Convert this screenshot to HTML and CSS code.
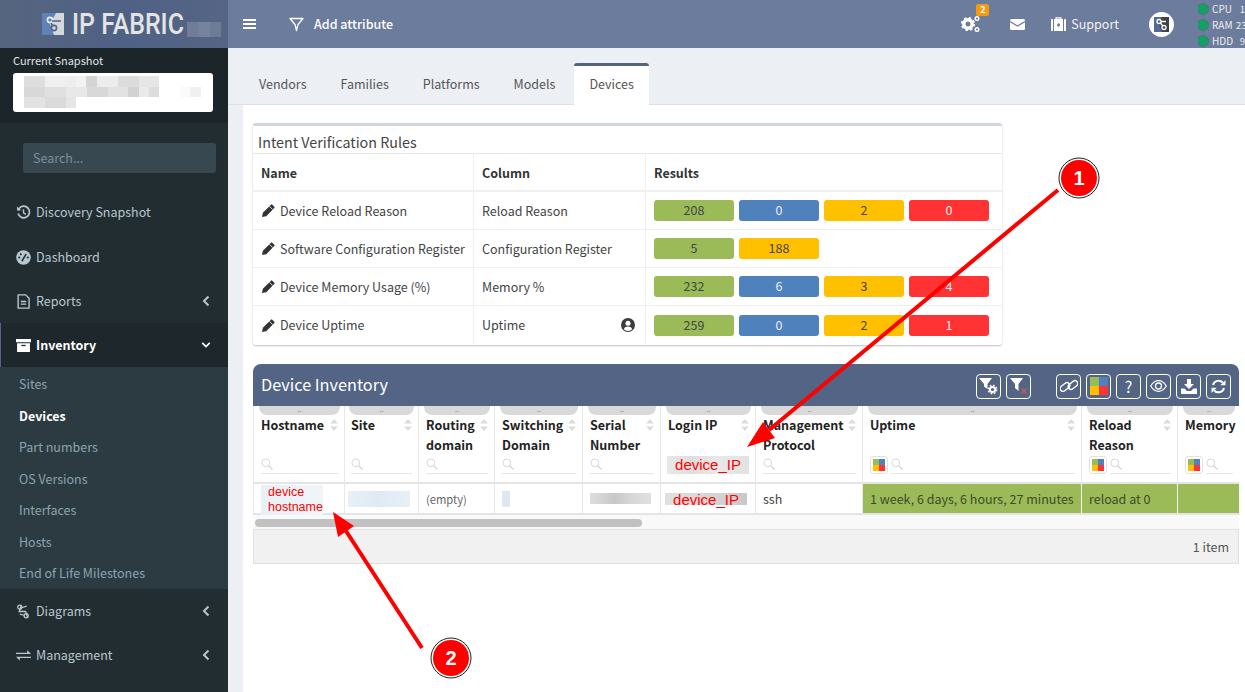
FILE: index.html
```html
<!DOCTYPE html>
<html lang="en">
<head>
<meta charset="utf-8">
<title>Device Inventory</title>
<link rel="stylesheet" href="styles.css">
</head>
<body>
<svg class="defs" width="0" height="0" aria-hidden="true">
  <defs>
    <symbol id="pencil" viewBox="0 0 16 16"><path d="M1 15l1-4.600L10.600 1.800a1 1 0 0 1 1.400 0l2.200 2.200a1 1 0 0 1 0 1.400L5.600 14z" fill="currentColor"/><path d="M9 3.500l3.500 3.500" stroke="#fff" stroke-width=".9"/></symbol>
    <symbol id="sort" viewBox="0 0 8 12"><path d="M4 0l4 4.500H0zM4 12l4-4.500H0z" fill="#dcdcdc"/></symbol>
    <symbol id="lens" viewBox="0 0 12 12"><circle cx="4.800" cy="4.800" r="3.900" fill="none" stroke="#d8d8d8" stroke-width="1"/><path d="M7.700 7.700l3.800 3.800" stroke="#d8d8d8" stroke-width="1.400"/></symbol>
    <symbol id="tiles" viewBox="0 0 12 12"><rect width="6" height="6" fill="#9bbb59"/><rect x="6" width="6" height="6" fill="#4f81bd"/><rect y="6" width="6" height="6" fill="#ffc000"/><rect x="6" y="6" width="6" height="6" fill="#ff3333"/></symbol>
    <symbol id="chev-left" viewBox="0 0 8 12"><path d="M6.500 1.500L2 6l4.500 4.500" fill="none" stroke="currentColor" stroke-width="2"/></symbol>
  </defs>
</svg>
<div class="app">
  <aside class="sidebar">
    <div class="brand">
      <svg class="brand-mark" width="22" height="22" viewBox="0 0 22 22"><rect width="22" height="22" fill="#d4d7dc"/><path d="M0 0h14L8 11l4 11H0z" fill="#5f83b8"/><circle cx="8" cy="7" r="2.600" fill="none" stroke="#eee" stroke-width="1.600"/><circle cx="12" cy="15" r="2.600" fill="none" stroke="#566584" stroke-width="1.600"/><path d="M10 8h9M9 10l2 3" stroke="#566584" stroke-width="1.500"/></svg>
      <span class="brand-text">IP FABRIC</span>
      <svg class="brand-blur" width="34" height="15" viewBox="0 0 34 15"><rect width="11" height="15" fill="#6f7d98"/><rect x="11" width="12" height="15" fill="#76839c"/><rect x="23" width="11" height="15" fill="#6d7b96"/></svg>
    </div>
    <div class="snapshot">
      <div class="snapshot-label">Current Snapshot</div>
      <div class="snapshot-box">
        <svg width="180" height="35" viewBox="0 0 180 35">
          <path d="M0 0h21v11H0z" fill="#dedede"/><path d="M21 0h21v11H21z" fill="#f0f0f0"/><path d="M42 0h22v11H42z" fill="#eee"/><path d="M52 0h10v11H52z" fill="#f2f2f2"/><path d="M62 0h11v11H62z" fill="#d5d5d5"/><path d="M73 0h21v11H73z" fill="#ececec"/><path d="M94 0h21v11H94z" fill="#dcdcdc"/><path d="M115 0h20v11h-20z" fill="#e6e6e6"/>
          <path d="M0 11h21v10H0z" fill="#d8d8d8"/><path d="M21 11h21v10H21z" fill="#e0e0e0"/><path d="M42 11h21v10H42z" fill="#e8e8e8"/><path d="M63 11h21v10H63z" fill="#d8d8d8"/><path d="M84 11h20v10H84z" fill="#e2e2e2"/><path d="M104 11h11v10h-11z" fill="#d2d2d2"/><path d="M115 11h10v10h-10z" fill="#eaeaea"/><path d="M125 11h10v10h-10z" fill="#dcdcdc"/><path d="M156 11h10v10h-10z" fill="#fafafa"/><path d="M166 11h11v10h-11z" fill="#f0f0f0"/>
          <path d="M0 21h21v11H0z" fill="#e2e2e2"/><path d="M21 21h21v11H21z" fill="#dadada"/><path d="M42 21h10v11H42z" fill="#e0e0e0"/><path d="M42 21h10v11H42z" fill="#e6e6e6"/>
        </svg>
      </div>
    </div>
    <div class="search-wrap"><div class="side-search">Search...</div></div>
    <nav class="menu">
      <a class="menu-item">
        <svg class="mi" viewBox="0 0 14 14"><path d="M2.800 3.400A5.400 5.400 0 1 1 2 8" fill="none" stroke="currentColor" stroke-width="1.600"/><path d="M.8 1.500l.3 3.800 3.800-.3z" fill="currentColor"/><path d="M7 4v3.300l2.200 1.400" fill="none" stroke="currentColor" stroke-width="1.300"/></svg>
        <span>Discovery Snapshot</span>
      </a>
      <a class="menu-item">
        <svg class="mi" viewBox="0 0 14 14"><circle cx="7" cy="7" r="6.800" fill="currentColor"/><path d="M5.500 10.500L9.500 3.600" stroke="#222d32" stroke-width="1.400"/><circle cx="3" cy="7" r="1" fill="#222d32"/><circle cx="4.500" cy="4" r="1" fill="#222d32"/><circle cx="11" cy="7" r="1" fill="#222d32"/></svg>
        <span>Dashboard</span>
      </a>
      <a class="menu-item">
        <svg class="mi" viewBox="0 0 14 14"><path d="M2 .8h7l3.200 3.200v9.200H2z" fill="none" stroke="currentColor" stroke-width="1.300"/><path d="M4.500 7h5M4.500 9.500h5" stroke="currentColor" stroke-width="1.200"/></svg>
        <span>Reports</span>
        <svg class="caret"><use href="#chev-left"/></svg>
      </a>
      <a class="menu-item active">
        <svg class="mi" viewBox="0 0 14 14"><path d="M0 1h14v3H0zM1 5h12v8H1z" fill="currentColor"/><path d="M5 7h4" stroke="#1e282c" stroke-width="1.200"/></svg>
        <span>Inventory</span>
        <svg class="caret" viewBox="0 0 12 8"><path d="M1.500 1.500L6 6l4.500-4.500" fill="none" stroke="currentColor" stroke-width="2"/></svg>
      </a>
      <div class="submenu">
        <a>Sites</a>
        <a class="current">Devices</a>
        <a>Part numbers</a>
        <a>OS Versions</a>
        <a>Interfaces</a>
        <a>Hosts</a>
        <a>End of Life Milestones</a>
      </div>
      <a class="menu-item">
        <svg class="mi" viewBox="0 0 14 14"><circle cx="3.500" cy="3" r="1.900" fill="none" stroke="currentColor" stroke-width="1.200"/><circle cx="9.500" cy="11" r="1.900" fill="none" stroke="currentColor" stroke-width="1.200"/><path d="M5 .8L3 7h6l2 6M5.300 3.500l4.700-1.500M3.500 9.500l4 1" fill="none" stroke="currentColor" stroke-width="1.200"/></svg>
        <span>Diagrams</span>
        <svg class="caret"><use href="#chev-left"/></svg>
      </a>
      <a class="menu-item">
        <svg class="mi" viewBox="0 0 14 14"><path d="M0 4h10.500V1.500L14 5.200H0zM14 9H3.500v2.500L0 7.800h14z" fill="currentColor" transform="translate(0 .4)"/></svg>
        <span>Management</span>
        <svg class="caret"><use href="#chev-left"/></svg>
      </a>
    </nav>
  </aside>

  <div class="content">
    <header class="topbar">
      <svg class="bars" width="13" height="12" viewBox="0 0 13 12"><path d="M0 1h13v2H0zM0 5h13v2H0zM0 9h13v2H0z" fill="#fff"/></svg>
      <div class="add-attr">
        <svg width="15" height="15" viewBox="0 0 15 15"><path d="M1 1.500h13L9 7.500v0L7.500 13.500 6 7.500z" fill="none" stroke="#fff" stroke-width="1.300" stroke-linejoin="round"/></svg>
        <span>Add attribute</span>
      </div>
      <div class="top-right">
        <div class="cogs">
          <svg width="20" height="18" viewBox="0 0 20 18"><circle cx="7" cy="9" r="4.200" fill="none" stroke="#fff" stroke-width="3.400"/><circle cx="7" cy="9" r="6.200" fill="none" stroke="#fff" stroke-width="1.800" stroke-dasharray="2.400 2.470"/><circle cx="16" cy="3.600" r="1.800" fill="none" stroke="#fff" stroke-width="1.400"/><circle cx="16" cy="14.500" r="1.800" fill="none" stroke="#fff" stroke-width="1.400"/></svg>
          <span class="cog-badge">2</span>
        </div>
        <svg class="mail" width="15" height="11" viewBox="0 0 15 11"><rect width="15" height="11" rx="1.500" fill="#fff"/><path d="M0 2.500l7.500 4.500L15 2.500" fill="none" stroke="#6c7c9c" stroke-width="1.200"/></svg>
        <div class="support">
          <svg width="15" height="14" viewBox="0 0 15 14"><path d="M5 2V.8h5V2" fill="none" stroke="#fff" stroke-width="1.200"/><rect y="2" width="2" height="12" rx=".6" fill="#fff"/><rect x="3" y="2" width="9" height="12" fill="#fff"/><rect x="13" y="2" width="2" height="12" rx=".6" fill="#fff"/><path d="M6 8h3M7.500 6.200v3.600" stroke="#6c7c9c" stroke-width="1.400"/></svg>
          <span>Support</span>
        </div>
        <svg class="avatar" width="25" height="25" viewBox="0 0 25 25"><circle cx="12.500" cy="12.500" r="12.500" fill="#fff"/><rect x="5" y="5" width="15" height="15" fill="#3f4147"/><path d="M5 5h8l-3 7 3 8H5z" fill="#566b92"/><circle cx="10" cy="9.500" r="2" fill="none" stroke="#fff" stroke-width="1.300"/><circle cx="15" cy="15.500" r="2" fill="none" stroke="#fff" stroke-width="1.300"/><path d="M11.500 11l2.200 3M12 9.500h5" stroke="#fff" stroke-width="1.300"/></svg>
        <div class="status">
          <div class="status-row"><i></i><span class="st-name">CPU</span><span class="st-val">1</span></div>
          <div class="status-row"><i></i><span class="st-name">RAM</span><span class="st-val">23</span></div>
          <div class="status-row"><i></i><span class="st-name">HDD</span><span class="st-val">9</span></div>
        </div>
      </div>
    </header>

    <div class="tabs">
      <a class="tab">Vendors</a>
      <a class="tab">Families</a>
      <a class="tab">Platforms</a>
      <a class="tab">Models</a>
      <a class="tab on">Devices</a>
    </div>

    <main class="page">
      <section class="rules">
        <h3 class="rules-title">Intent Verification Rules</h3>
        <div class="rules-grid">
          <div class="rc th">Name</div><div class="rc th">Column</div><div class="rc th">Results</div>

          <div class="rc"><svg class="pen"><use href="#pencil"/></svg>Device Reload Reason</div>
          <div class="rc">Reload Reason</div>
          <div class="rc res"><b class="g">208</b><b class="bl">0</b><b class="y">2</b><b class="r">0</b></div>

          <div class="rc"><svg class="pen"><use href="#pencil"/></svg>Software Configuration Register</div>
          <div class="rc">Configuration Register</div>
          <div class="rc res"><b class="g">5</b><b class="y">188</b></div>

          <div class="rc"><svg class="pen"><use href="#pencil"/></svg>Device Memory Usage (%)</div>
          <div class="rc">Memory %</div>
          <div class="rc res"><b class="g">232</b><b class="bl">6</b><b class="y">3</b><b class="r">4</b></div>

          <div class="rc"><svg class="pen"><use href="#pencil"/></svg>Device Uptime</div>
          <div class="rc split">Uptime
            <svg width="14" height="14" viewBox="0 0 14 14"><circle cx="7" cy="7" r="7" fill="#3d3d3d"/><circle cx="7" cy="5.300" r="2.500" fill="#fff"/><path d="M2.800 11.200c.7-2 2.300-2.700 4.200-2.700s3.500.7 4.200 2.700A6 6 0 0 1 7 13a6 6 0 0 1-4.200-1.800z" fill="#fff"/></svg>
          </div>
          <div class="rc res"><b class="g">259</b><b class="bl">0</b><b class="y">2</b><b class="r">1</b></div>
        </div>
      </section>

      <section class="inventory">
        <div class="inv-head">
          <h2>Device Inventory</h2>
          <div class="tools">
            <div class="tool-group">
              <button class="tool"><svg width="19" height="17" viewBox="0 0 19 17"><path d="M0 0h13L8.500 6v5L5 8.500V6z" fill="#fff"/><circle cx="13.500" cy="11.500" r="2.600" fill="none" stroke="#fff" stroke-width="2"/><circle cx="13.500" cy="11.500" r="4.300" fill="none" stroke="#fff" stroke-width="1.300" stroke-dasharray="1.700 1.680"/></svg></button>
              <button class="tool"><svg width="19" height="17" viewBox="0 0 19 17"><path d="M1 0h13L9.500 6v7L6 10V6z" fill="#fff"/><path d="M12.500 10.500l5 5M17.500 10.500l-5 5" stroke="#d9534f" stroke-width="1.300"/></svg></button>
            </div>
            <div class="tool-group">
              <button class="tool"><svg width="18" height="16" viewBox="0 0 18 16"><g fill="none" stroke="#fff" stroke-width="1.400" transform="rotate(-38 9 8)"><rect x="0" y="3.500" width="10.500" height="5.600" rx="2.800"/><rect x="7.500" y="6.900" width="10.500" height="5.600" rx="2.800"/></g></svg></button>
              <button class="tool"><svg width="18" height="18"><use href="#tiles"/></svg></button>
              <button class="tool qm">?</button>
              <button class="tool"><svg width="17" height="12" viewBox="0 0 17 12"><path d="M.7 6C3 2.200 5.600.7 8.500.7S14 2.200 16.300 6c-2.300 3.800-4.900 5.300-7.800 5.300S3 9.800.7 6z" fill="none" stroke="#fff" stroke-width="1.200"/><circle cx="8.500" cy="6" r="3" fill="none" stroke="#fff" stroke-width="1.300"/></svg></button>
              <button class="tool"><svg width="16" height="15" viewBox="0 0 16 15"><path d="M6 0h4v5h3L8 10 3 5h3z" fill="#fff"/><path d="M0 9.500h3.500L6 12h4l2.500-2.500H16V15H0z" fill="#fff"/></svg></button>
              <button class="tool"><svg width="15" height="15" viewBox="0 0 15 15"><path d="M2 6a5.700 5.700 0 0 1 9.700-2.500M13 9a5.700 5.700 0 0 1-9.700 2.500" fill="none" stroke="#fff" stroke-width="2"/><path d="M14.500 1v5.200H9.300zM.5 14V8.800h5.200z" fill="#fff"/></svg></button>
            </div>
          </div>
        </div>
        <div class="dt">
          <div class="hc"><div class="grip">..</div><div class="ht"><span>Hostname</span><svg class="sort"><use href="#sort"/></svg></div><div class="hf"><svg class="lens"><use href="#lens"/></svg></div></div>
          <div class="hc"><div class="grip">..</div><div class="ht"><span>Site</span><svg class="sort"><use href="#sort"/></svg></div><div class="hf"><svg class="lens"><use href="#lens"/></svg></div></div>
          <div class="hc"><div class="grip">..</div><div class="ht"><span>Routing domain</span><svg class="sort"><use href="#sort"/></svg></div><div class="hf"><svg class="lens"><use href="#lens"/></svg></div></div>
          <div class="hc"><div class="grip">..</div><div class="ht"><span>Switching Domain</span><svg class="sort"><use href="#sort"/></svg></div><div class="hf"><svg class="lens"><use href="#lens"/></svg></div></div>
          <div class="hc"><div class="grip">..</div><div class="ht"><span>Serial Number</span><svg class="sort"><use href="#sort"/></svg></div><div class="hf"><svg class="lens"><use href="#lens"/></svg></div></div>
          <div class="hc"><div class="grip">..</div><div class="ht"><span>Login IP</span><svg class="sort"><use href="#sort"/></svg></div><div class="hf bare"><span class="ip-filter">device_IP</span></div></div>
          <div class="hc"><div class="grip">..</div><div class="ht"><span>Management Protocol</span><svg class="sort"><use href="#sort"/></svg></div><div class="hf"><svg class="lens"><use href="#lens"/></svg></div></div>
          <div class="hc"><div class="grip">..</div><div class="ht"><span>Uptime</span><svg class="sort"><use href="#sort"/></svg></div><div class="hf tiled"><span class="tile"><svg width="12" height="12"><use href="#tiles"/></svg></span><div class="hf-in"><svg class="lens"><use href="#lens"/></svg></div></div></div>
          <div class="hc"><div class="grip">..</div><div class="ht"><span>Reload Reason</span><svg class="sort"><use href="#sort"/></svg></div><div class="hf tiled"><span class="tile"><svg width="12" height="12"><use href="#tiles"/></svg></span><div class="hf-in"><svg class="lens"><use href="#lens"/></svg></div></div></div>
          <div class="hc last"><div class="grip">..</div><div class="ht"><span>Memory</span></div><div class="hf tiled"><span class="tile"><svg width="12" height="12"><use href="#tiles"/></svg></span><div class="hf-in"><svg class="lens"><use href="#lens"/></svg></div></div></div>

          <div class="td"><span class="host-mask">device<br>hostname</span></div>
          <div class="td"><span class="site-mask"></span></div>
          <div class="td small">(empty)</div>
          <div class="td"><span class="sw-mask"></span></div>
          <div class="td"><span class="serial-mask"></span></div>
          <div class="td"><span class="ip-mask">device_IP</span></div>
          <div class="td">ssh</div>
          <div class="td ok">1 week, 6 days, 6 hours, 27 minutes</div>
          <div class="td ok">reload at 0</div>
          <div class="td ok last"></div>
        </div>
        <div class="scroll"><div class="thumb"></div></div>
        <div class="dt-foot">1 item</div>
      </section>
    </main>
  </div>
</div>

<svg class="callouts" width="1245" height="692" viewBox="0 0 1245 692" aria-hidden="true">
  <path d="M1058 190L769 430" stroke="#f00" stroke-width="4"/>
  <path d="M747 447L763 422L775 438z" fill="#f00"/>
  <circle cx="1079" cy="178" r="20" fill="#fff" stroke="#222" stroke-width="1"/>
  <circle cx="1079" cy="178" r="18" fill="#f00"/>
  <text class="callout-n" x="1079" y="185">1</text>
  <path d="M422 648L346 531" stroke="#f00" stroke-width="4"/>
  <path d="M333 512L338 537L354 526z" fill="#f00"/>
  <circle cx="451" cy="658" r="20" fill="#fff" stroke="#222" stroke-width="1"/>
  <circle cx="451" cy="658" r="18" fill="#f00"/>
  <text class="callout-n" x="451" y="665">2</text>
</svg>
</body>
</html>
```

FILE: styles.css
```css
* { box-sizing: border-box; }
html, body { margin: 0; height: 100%; overflow: hidden; }
body {
  position: relative;
  font: 12.500px/20px "Noto Sans CJK SC", "Noto Sans", sans-serif;
  color: #444;
  background: #ecf0f5;
}
.defs { position: absolute; }
.app { display: flex; width: 1245px; height: 692px; }

/* sidebar */
.sidebar { width: 228px; flex: none; background: #222d32; color: #b8c7ce; }
.brand {
  height: 48px;
  display: flex;
  align-items: center;
  padding: 0 0 0 42px;
  background: linear-gradient(90deg, #56657f, #4f6185 55%, #566584);
}
.brand-mark { flex: none; }
.brand-text {
  display: block;
  width: 112px;
  margin-left: 8px;
  font: 500 30px/48px "Roboto", sans-serif;
  color: #e4e4e4;
  white-space: nowrap;
  transform: scaleX(.83);
  transform-origin: left center;
}
.brand-blur { margin: 11px 0 0 3px; flex: none; }
.snapshot { height: 75px; background: #1c2529; padding: 3px 15px 0 13px; }
.snapshot-label { font-size: 11px; line-height: 18px; color: #e0e4e6; }
.snapshot-box {
  margin-top: 4px;
  height: 39px;
  background: #fff;
  border-radius: 3px;
  padding: 3px 0 0 11px;
}
.snapshot-box svg { display: block; }
.search-wrap { padding: 20px 12px 0 23px; }
.side-search {
  height: 30px;
  border-radius: 3px;
  background: #374850;
  color: #7f8f97;
  padding: 5px 10px;
}
.menu { margin-top: 17px; }
.menu-item {
  display: flex;
  align-items: center;
  height: 44px;
  padding-left: 16px;
  color: #b8c7ce;
}
.menu-item:first-child { height: 45px; padding-bottom: 1px; }
.mi { width: 15px; height: 15px; flex: none; margin-right: 5px; }
.caret { width: 10px; height: 12px; margin: 0 17px 0 auto; flex: none; }
.menu-item.active {
  background: #1e282c;
  color: #fff;
  font-weight: 700;
  box-shadow: inset 1px 0 0 #56657f;
}
.submenu {
  height: 222px;
  background: #2c3b41;
  padding: 1px 0 0 19px;
  color: #8aa4af;
  display: flex;
  flex-direction: column;
}
.submenu a { height: 31.600px; line-height: 31px; display: block; }
.submenu .current { color: #fff; font-weight: 700; }

/* right column */
.content { flex: 1; min-width: 0; display: flex; flex-direction: column; }
.topbar {
  height: 48px;
  flex: none;
  background: #6c7c9c;
  display: flex;
  align-items: center;
  color: #fff;
  padding-left: 15px;
}
.add-attr { display: flex; align-items: center; gap: 10px; margin-left: 33px; font-weight: 500; }
.top-right { margin-left: auto; display: flex; align-items: center; height: 48px; }
.cogs { position: relative; width: 20px; height: 18px; margin-right: 29px; }
.cogs svg { display: block; }
.cog-badge {
  position: absolute;
  top: -11px;
  left: 15px;
  width: 13px;
  height: 12px;
  background: #f39c12;
  border-radius: 2px;
  font-size: 9px;
  font-weight: 700;
  line-height: 12px;
  text-align: center;
}
.mail { margin-right: 26px; }
.support { display: flex; align-items: center; gap: 5px; margin-right: 30px; color: #f2f2f2; }
.avatar { margin-right: 24px; }
.status { width: 47px; height: 48px; overflow: hidden; padding-top: 1px; }
.status-row {
  display: flex;
  align-items: center;
  height: 16px;
  font-size: 10px;
  color: #eee;
  white-space: nowrap;
}
.status-row i {
  width: 10px;
  height: 10px;
  border-radius: 50%;
  background: #0ea561;
  margin-right: 4px;
  flex: none;
  box-shadow: 0 0 0 1px #596a86;
}
.st-name { width: 24px; flex: none; }
.st-val { width: 9px; flex: none; font-size: 9.500px; text-align: right; }

/* tabs */
.tabs {
  height: 57px;
  flex: none;
  padding: 15px 0 0 16px;
  display: flex;
  align-items: stretch;
  border-bottom: 1px solid #dde1e6;
}
.tab { padding: 11px 15px 0; margin-right: 4px; color: #555; }
.tab.on {
  background: #fff;
  border-top: 3px solid #56657f;
  border-radius: 3px 3px 0 0;
  padding-top: 8px;
  margin-bottom: -1px;
}
.page { flex: 1; margin-left: 15px; background: #fff; padding: 18px 6px 0 10px; }

/* rules */
.rules {
  width: 749px;
  height: 222px;
  border-top: 3px solid #d2d6de;
  border-radius: 3px;
  box-shadow: 0 1px 2px rgba(0,0,0,.25);
  background: #fff;
}
.rules-title {
  margin: 0;
  height: 28px;
  padding: 3px 5px 0;
  font-size: 14.300px;
  line-height: 26px;
  font-weight: 400;
  color: #444;
  border-bottom: 1px solid #e6e8ec;
}
.rules-grid { display: grid; grid-template-columns: 221px 172px 356px; grid-template-rows: 38px repeat(4, 38px); }
.rc {
  display: flex;
  align-items: center;
  padding: 0 8px;
  border-right: 1px solid #f0f0f0;
  border-bottom: 1px solid #f0f0f0;
  color: #444;
  white-space: nowrap;
}
.rc:nth-child(3n) { border-right: 0; }
.rc:nth-last-child(-n+3) { border-bottom: 0; }
.th { font-weight: 700; color: #333; border-bottom: 2px solid #f0f0f0; padding-top: 1px; }
.pen { width: 15px; height: 15px; margin-right: 4px; color: #333; flex: none; }
.split { justify-content: space-between; padding-right: 10px; }
.res { gap: 5px; }
.res b {
  width: 80px;
  height: 21px;
  border-radius: 3px;
  font-weight: 400;
  line-height: 20px;
  text-align: center;
}
.g { background: #9bbb59; }
.bl { background: #4f81bd; color: #eef; }
.y { background: #ffc000; }
.r { background: #ff3333; color: #fee; }

/* inventory */
.inventory { margin-top: 19px; width: 986px; }
.inv-head {
  height: 42px;
  background: #536484;
  border-radius: 8px 8px 0 0;
  display: flex;
  align-items: center;
  justify-content: space-between;
  padding: 0 8px;
  color: #fff;
}
.inv-head h2 { margin: 0 0 2px; font-size: 16.300px; font-weight: 400; }
.tools { display: flex; gap: 25px; margin-top: 2px; }
.tool-group { display: flex; gap: 5px; }
.tool {
  width: 25px;
  height: 25px;
  padding: 0;
  display: flex;
  align-items: center;
  justify-content: center;
  background: none;
  border: 1px solid #fff;
  border-radius: 4px;
  color: #fff;
  font: 16px/20px "Noto Sans CJK SC", sans-serif;
}
.dt {
  display: grid;
  grid-template-columns: 92px 74px 76px 88px 78px 95px 107px 219px 96px 61px;
  grid-template-rows: 78px 31px;
  overflow: hidden;
  width: 986px;
}
.hc {
  min-width: 0;
  padding: 0 6px 0 7px;
  border-right: 1px solid #e8e8e8;
  border-bottom: 2px solid #e4e4e4;
  display: flex;
  flex-wrap: wrap;
  align-content: flex-start;
}
.hc:first-child { border-left: 1px solid #e8e8e8; }
.hc:nth-child(2) { padding-left: 6px; }
.grip {
  width: calc(100% + 4px);
  margin: 0 -2px;
  height: 9px;
  background: #d9d9d9;
  border-radius: 0 0 8px 8px;
  font-size: 7px;
  line-height: 6px;
  text-align: center;
  color: #777;
}
.ht {
  width: 100%;
  height: 40px;
  display: flex;
  justify-content: space-between;
  font-weight: 700;
  color: #222;
}
.ht span { flex: 1; min-width: 0; }
.sort { width: 8px; height: 12px; margin-top: 4px; flex: none; }
.hf {
  width: 100%;
  height: 19px;
  border-bottom: 1px solid #e6e6e6;
  display: flex;
  align-items: center;
}
.hf.bare { border-bottom: 0; }
.hf.tiled { border-bottom: 0; gap: 3px; }
.hf-in { flex: 1; height: 19px; border-bottom: 1px solid #e6e6e6; display: flex; align-items: center; min-width: 0; }
.lens { width: 12px; height: 12px; flex: none; }
.tile {
  width: 18px;
  height: 18px;
  flex: none;
  border: 1px solid #e2e2e2;
  border-radius: 3px;
  display: flex;
  align-items: center;
  justify-content: center;
}
.ip-filter {
  width: 84px;
  height: 18px;
  margin-left: -1px;
  background: linear-gradient(90deg, #e8e8e8, #dedede 30%, #e8e8e8 60%, #e2e2e2);
  font: 15px/18px "Liberation Sans", sans-serif;
  color: #f00;
  text-align: center;
}
.td {
  display: flex;
  align-items: center;
  padding: 0 7px;
  border-right: 1px solid #e8e8e8;
  border-bottom: 2px solid #e4e4e4;
  white-space: nowrap;
  min-width: 0;
}
.td:nth-child(11) { border-left: 1px solid #e8e8e8; }
.small { font-size: 11.200px; color: #666; }
.ok { background: #9bbb59; border-right-color: #fff; color: #3f4a2a; }
.last { border-right: 0; }
.host-mask {
  display: block;
  width: 62px;
  margin: 3px 0 0 0;
  padding-left: 7px;
  background: linear-gradient(90deg, #e8f0f6, #f0f5f9);
  font: 12.500px/15px "Liberation Sans", sans-serif;
  color: #f00;
}
.site-mask { display: block; width: 62px; height: 16px; background: linear-gradient(90deg, #e8f0f6, #deeaf2 50%, #e8f0f6); margin-left: -4px; }
.sw-mask { display: block; width: 8px; height: 16px; background: #dce9f2; }
.serial-mask { display: block; width: 61px; height: 11px; background: linear-gradient(90deg, #dedede, #c8c8c8 40%, #d8d8d8 70%, #e0e0e0); }
.ip-mask {
  display: block;
  width: 82px;
  height: 12px;
  margin: 1px 0 0 -3px;
  background: linear-gradient(90deg, #e0e0e0, #d4d4d4 60%, #c8c8c8);
  font: 15px/13px "Liberation Sans", sans-serif;
  color: #f00;
  text-align: center;
}
.scroll { height: 14px; background: #f9f9f9; padding: 4px 2px 0; }
.thumb { width: 387px; height: 8px; border-radius: 4px; background: #c1c1c1; }
.dt-foot {
  height: 35px;
  background: #f1f1f1;
  border: 1px solid #e0e0e0;
  text-align: right;
  padding: 7px 9px 0 0;
  color: #555;
}

/* annotation layer */
.callouts { position: absolute; left: 0; top: 0; pointer-events: none; }
.callout-n { font: 700 20px "Liberation Sans", sans-serif; fill: #fff; text-anchor: middle; }
```
